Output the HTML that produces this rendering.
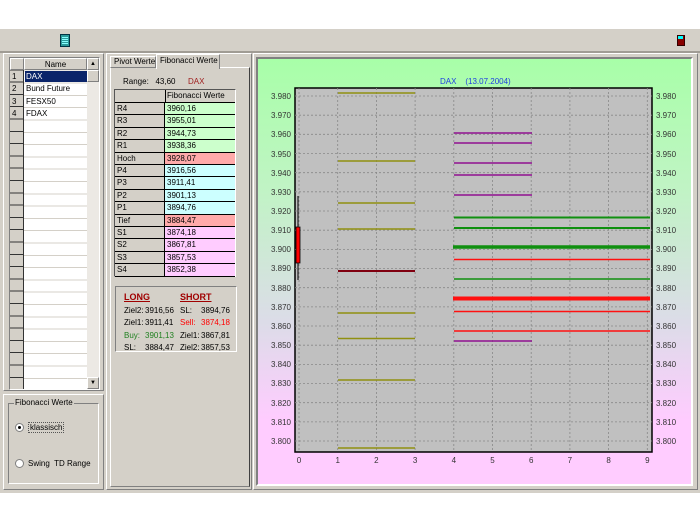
<!DOCTYPE html><html><head><style>
body{margin:0;width:700px;height:525px;background:#fff;position:relative;overflow:hidden;font-family:"Liberation Sans",sans-serif;font-size:8px;color:#000}
div{position:absolute;box-sizing:border-box;white-space:nowrap}
.r{border-top:1px solid #fff;border-left:1px solid #fff;border-right:1px solid #808080;border-bottom:1px solid #808080}
.s{border-top:1px solid #808080;border-left:1px solid #808080;border-right:1px solid #fff;border-bottom:1px solid #fff}
.row{left:0;height:12.4px;width:120px}
.row span{position:absolute;top:0;height:12.4px;line-height:12px;padding-left:2px;box-sizing:border-box;border-bottom:1px solid #000}
.l{left:0;width:50px;background:#d4d0c8;border-right:1px solid #000}
.v{left:50px;width:70px}
</style></head><body>
<div style="left:0;top:28px;width:700px;height:465px;background:#d4d0c8"></div>
<div style="left:0;top:28px;width:700px;height:25px;border-top:1px solid #fff;border-bottom:2px solid #a09c94"></div>
<div style="left:60px;top:34px;width:10px;height:13px;background:#2a9a9a;border:1px solid #034"></div>
<div style="left:62px;top:36px;width:6px;height:9px;background:repeating-linear-gradient(#2a9a9a 0,#2a9a9a 1px,#8ff 1px,#8ff 2px)"></div>
<div style="left:677px;top:35px;width:8px;height:11px;background:#800;border:1px solid #300"></div>
<div style="left:678px;top:36px;width:5px;height:3px;background:#0ff"></div>
<!-- left panel -->
<div class="r" style="left:3px;top:53px;width:101px;height:338px"></div>
<div class="s" style="left:9px;top:57px;width:91px;height:333px;background:#fff"></div>
<div style="left:10px;top:58px;width:77px;height:331px;background:repeating-linear-gradient(#fff 0,#fff 11.3px,#d4d0c8 11.3px,#d4d0c8 12.3px);background-position:0 1px"></div>
<div style="left:10px;top:58px;width:14px;height:331px;background:repeating-linear-gradient(#d4d0c8 0,#d4d0c8 11.3px,#333 11.3px,#333 12.3px);border-right:1px solid #333"></div>
<div class="r" style="left:10px;top:58px;width:14px;height:12px;background:#d4d0c8"></div>
<div class="r" style="left:24px;top:58px;width:63px;height:12px;background:#d4d0c8;text-align:center;line-height:11px">Name</div>
<div style="left:25px;top:71px;width:62px;height:11px;background:#0a246a;color:#fff;padding-left:1px;line-height:11px">DAX</div>
<div style="left:26px;top:83px;line-height:12px">Bund Future</div>
<div style="left:26px;top:95.5px;line-height:12px">FESX50</div>
<div style="left:26px;top:108px;line-height:12px">FDAX</div>
<div style="left:12px;top:71px;line-height:11px">1</div>
<div style="left:12px;top:83px;line-height:12px">2</div>
<div style="left:12px;top:95.5px;line-height:12px">3</div>
<div style="left:12px;top:108px;line-height:12px">4</div>
<div style="left:87px;top:58px;width:12px;height:331px;background:#ece9e4"></div>
<div class="r" style="left:87px;top:58px;width:12px;height:12px;background:#d4d0c8;font-size:6px;text-align:center;line-height:10px">▲</div>
<div class="r" style="left:87px;top:70px;width:12px;height:12px;background:#d4d0c8"></div>
<div class="r" style="left:87px;top:377px;width:12px;height:12px;background:#d4d0c8;font-size:6px;text-align:center;line-height:10px">▼</div>
<div class="r" style="left:3px;top:394px;width:101px;height:96px"></div>
<div class="s" style="left:8px;top:403px;width:91px;height:81px"></div>
<div style="left:14px;top:398px;background:#d4d0c8;padding:0 1px">Fibonacci Werte</div>
<div style="left:15px;top:423px;width:9px;height:9px;border-radius:50%;background:#fff;border:1px solid #808080"></div>
<div style="left:18px;top:426px;width:3px;height:3px;border-radius:50%;background:#000"></div>
<div style="left:28px;top:422px;border:1px dotted #555;padding:0 1px">klassisch</div>
<div style="left:15px;top:459px;width:9px;height:9px;border-radius:50%;background:#fff;border:1px solid #808080"></div>
<div style="left:28px;top:459px">Swing&nbsp; TD Range</div>
<!-- middle -->
<div class="r" style="left:106px;top:53px;width:146px;height:437px"></div>
<div class="r" style="left:110px;top:67px;width:140px;height:420px;border-right-color:#404040"></div>
<div class="r" style="left:110px;top:56px;width:46px;height:12px;background:#d4d0c8;line-height:10px;padding-left:3px;overflow:hidden">Pivot Werte</div>
<div class="r" style="left:156px;top:54px;width:64px;height:15px;background:#d4d0c8;line-height:11px;padding-left:3px;border-bottom:none;overflow:hidden">Fibonacci Werte</div>
<div style="left:123px;top:77px">Range:&nbsp;&nbsp; 43,60</div>
<div style="left:188px;top:77px;color:#a02020">DAX</div>
<div style="left:114px;top:89px;width:122px;height:188px;border:1px solid #555;border-right-color:#fff;border-bottom-color:#fff">
<div style="left:0;top:0;width:120px;height:13px;border-bottom:1px solid #000"><span style="position:absolute;left:0;width:50px;height:12px;border-right:1px solid #000"></span><span style="position:absolute;left:52px;line-height:12px">Fibonacci Werte</span></div>
<div style="left:0;top:13px;width:120px">
<div class="row" style="top:0"><span class="l">R4</span><span class="v" style="background:#ccffcc">3960,16</span></div>
<div class="row" style="top:12.4px"><span class="l">R3</span><span class="v" style="background:#ccffcc">3955,01</span></div>
<div class="row" style="top:24.8px"><span class="l">R2</span><span class="v" style="background:#ccffcc">3944,73</span></div>
<div class="row" style="top:37.2px"><span class="l">R1</span><span class="v" style="background:#ccffcc">3938,36</span></div>
<div class="row" style="top:49.6px"><span class="l">Hoch</span><span class="v" style="background:#ffaaaa">3928,07</span></div>
<div class="row" style="top:62px"><span class="l">P4</span><span class="v" style="background:#ccffff">3916,56</span></div>
<div class="row" style="top:74.4px"><span class="l">P3</span><span class="v" style="background:#ccffff">3911,41</span></div>
<div class="row" style="top:86.8px"><span class="l">P2</span><span class="v" style="background:#ccffff">3901,13</span></div>
<div class="row" style="top:99.2px"><span class="l">P1</span><span class="v" style="background:#ccffff">3894,76</span></div>
<div class="row" style="top:111.6px"><span class="l">Tief</span><span class="v" style="background:#ffaaaa">3884,47</span></div>
<div class="row" style="top:124px"><span class="l">S1</span><span class="v" style="background:#ffccff">3874,18</span></div>
<div class="row" style="top:136.4px"><span class="l">S2</span><span class="v" style="background:#ffccff">3867,81</span></div>
<div class="row" style="top:148.8px"><span class="l">S3</span><span class="v" style="background:#ffccff">3857,53</span></div>
<div class="row" style="top:161.2px"><span class="l">S4</span><span class="v" style="background:#ffccff">3852,38</span></div>
</div></div>
<div class="s" style="left:115px;top:286px;width:122px;height:66px"></div>
<div style="left:124px;top:292px;color:#a00000;font-weight:bold;text-decoration:underline;font-size:9px">LONG</div>
<div style="left:180px;top:292px;color:#a00000;font-weight:bold;text-decoration:underline;font-size:9px">SHORT</div>
<div style="left:124px;top:305px;line-height:12.3px">Ziel2:<br>Ziel1:<br><span style="color:#208020">Buy:</span><br>SL:</div>
<div style="left:145px;top:305px;line-height:12.3px">3916,56<br>3911,41<br><span style="color:#208020">3901,13</span><br>3884,47</div>
<div style="left:180px;top:305px;line-height:12.3px">SL:<br><span style="color:#f00">Sell:</span><br>Ziel1:<br>Ziel2:</div>
<div style="left:201px;top:305px;line-height:12.3px">3894,76<br><span style="color:#f00">3874,18</span><br>3867,81<br>3857,53</div>
<!-- chart -->
<div class="r" style="left:253px;top:53px;width:445px;height:437px"></div>
<div class="s" style="left:256px;top:57px;width:437px;height:429px;border-width:2px;background:linear-gradient(#a8ffa8 0%,#c0f4c4 30%,#dcdce8 62%,#ffccff 85%,#ffccff 100%)"></div>
<svg style="position:absolute;left:0;top:0" width="700" height="525" font-family="Liberation Sans" font-size="8">
<text x="440" y="84" fill="#2040e0">DAX&#160;&#160;&#160; (13.07.2004)</text>
<rect x="295" y="88" width="357" height="364" fill="#c0c0c0" stroke="#000" stroke-width="1.5"/>
<g stroke="#888" stroke-dasharray="2,2" stroke-width="0.8">
<line x1="299" y1="88" x2="299" y2="452"/><line x1="337.7" y1="88" x2="337.7" y2="452"/><line x1="376.4" y1="88" x2="376.4" y2="452"/><line x1="415.1" y1="88" x2="415.1" y2="452"/><line x1="453.8" y1="88" x2="453.8" y2="452"/><line x1="492.5" y1="88" x2="492.5" y2="452"/><line x1="531.2" y1="88" x2="531.2" y2="452"/><line x1="569.9" y1="88" x2="569.9" y2="452"/><line x1="608.6" y1="88" x2="608.6" y2="452"/><line x1="647.3" y1="88" x2="647.3" y2="452"/>
<line x1="295" y1="96" x2="652" y2="96"/><line x1="295" y1="115.2" x2="652" y2="115.2"/><line x1="295" y1="134.3" x2="652" y2="134.3"/><line x1="295" y1="153.5" x2="652" y2="153.5"/><line x1="295" y1="172.7" x2="652" y2="172.7"/><line x1="295" y1="191.8" x2="652" y2="191.8"/><line x1="295" y1="211" x2="652" y2="211"/><line x1="295" y1="230.2" x2="652" y2="230.2"/><line x1="295" y1="249.4" x2="652" y2="249.4"/><line x1="295" y1="268.5" x2="652" y2="268.5"/><line x1="295" y1="287.7" x2="652" y2="287.7"/><line x1="295" y1="306.9" x2="652" y2="306.9"/><line x1="295" y1="326" x2="652" y2="326"/><line x1="295" y1="345.2" x2="652" y2="345.2"/><line x1="295" y1="364.4" x2="652" y2="364.4"/><line x1="295" y1="383.5" x2="652" y2="383.5"/><line x1="295" y1="402.7" x2="652" y2="402.7"/><line x1="295" y1="421.9" x2="652" y2="421.9"/><line x1="295" y1="441" x2="652" y2="441"/>
</g>
<g fill="#333" text-anchor="end">
<text x="291" y="99">3.980</text><text x="291" y="118">3.970</text><text x="291" y="137">3.960</text><text x="291" y="157">3.950</text><text x="291" y="176">3.940</text><text x="291" y="195">3.930</text><text x="291" y="214">3.920</text><text x="291" y="233">3.910</text><text x="291" y="252">3.900</text><text x="291" y="271">3.890</text><text x="291" y="291">3.880</text><text x="291" y="310">3.870</text><text x="291" y="329">3.860</text><text x="291" y="348">3.850</text><text x="291" y="367">3.840</text><text x="291" y="386">3.830</text><text x="291" y="406">3.820</text><text x="291" y="425">3.810</text><text x="291" y="444">3.800</text>
</g>
<g fill="#333">
<text x="656" y="99">3.980</text><text x="656" y="118">3.970</text><text x="656" y="137">3.960</text><text x="656" y="157">3.950</text><text x="656" y="176">3.940</text><text x="656" y="195">3.930</text><text x="656" y="214">3.920</text><text x="656" y="233">3.910</text><text x="656" y="252">3.900</text><text x="656" y="271">3.890</text><text x="656" y="291">3.880</text><text x="656" y="310">3.870</text><text x="656" y="329">3.860</text><text x="656" y="348">3.850</text><text x="656" y="367">3.840</text><text x="656" y="386">3.830</text><text x="656" y="406">3.820</text><text x="656" y="425">3.810</text><text x="656" y="444">3.800</text>
</g>
<g fill="#333" text-anchor="middle">
<text x="299" y="463">0</text><text x="337.7" y="463">1</text><text x="376.4" y="463">2</text><text x="415.1" y="463">3</text><text x="453.8" y="463">4</text><text x="492.5" y="463">5</text><text x="531.2" y="463">6</text><text x="569.9" y="463">7</text><text x="608.6" y="463">8</text><text x="647.3" y="463">9</text>
</g>
<g stroke="#909010" stroke-width="1.5">
<line x1="338" y1="93" x2="415" y2="93"/><line x1="338" y1="161" x2="415" y2="161"/><line x1="338" y1="203" x2="415" y2="203"/><line x1="338" y1="229" x2="415" y2="229"/><line x1="338" y1="313" x2="415" y2="313"/><line x1="338" y1="338.5" x2="415" y2="338.5"/><line x1="338" y1="380" x2="415" y2="380"/><line x1="338" y1="448" x2="415" y2="448"/>
</g>
<line x1="338" y1="271" x2="415" y2="271" stroke="#800010" stroke-width="2"/>
<g stroke="#901090" stroke-width="1.5">
<line x1="454" y1="133" x2="532" y2="133"/><line x1="454" y1="143" x2="532" y2="143"/><line x1="454" y1="163" x2="532" y2="163"/><line x1="454" y1="175" x2="532" y2="175"/><line x1="454" y1="195" x2="532" y2="195"/><line x1="454" y1="341" x2="532" y2="341"/>
</g>
<g stroke="#109010">
<line x1="454" y1="217.5" x2="650" y2="217.5" stroke-width="2"/><line x1="454" y1="228" x2="650" y2="228" stroke-width="2"/><line x1="453" y1="247" x2="650" y2="247" stroke-width="3.5"/><line x1="454" y1="279" x2="650" y2="279" stroke-width="1.5"/>
</g>
<g stroke="#ff1010">
<line x1="454" y1="259.5" x2="650" y2="259.5" stroke-width="1.5"/><line x1="453" y1="298.5" x2="650" y2="298.5" stroke-width="4"/><line x1="454" y1="311.5" x2="650" y2="311.5" stroke-width="1.5"/><line x1="454" y1="331" x2="650" y2="331" stroke-width="1.5"/>
</g>
<line x1="298" y1="196" x2="298" y2="280" stroke="#000" stroke-width="1"/>
<rect x="296" y="227" width="4" height="36" fill="#f00" stroke="#000" stroke-width="0.8"/>
</svg>
</body></html>
